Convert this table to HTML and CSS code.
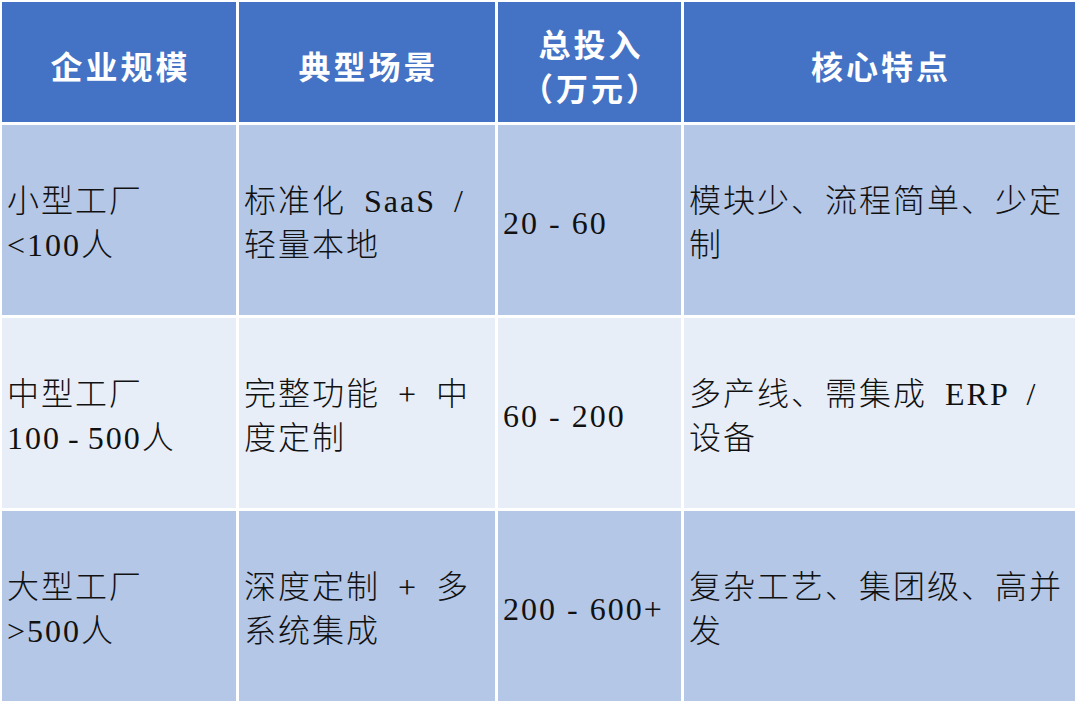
FILE: index.html
```html
<!DOCTYPE html>
<html lang="zh-CN">
<head>
<meta charset="utf-8">
<title>企业规模与投入</title>
<link rel="stylesheet" href="styles.css">
</head>
<body>
<div class="table">
  <div class="cell head">企业规模</div>
  <div class="cell head">典型场景</div>
  <div class="cell head">总投入<br>（万元）</div>
  <div class="cell head">核心特点</div>

  <div class="cell dark">小型工厂<br>&lt;100人</div>
  <div class="cell dark wide">标准化 SaaS / 轻量本地</div>
  <div class="cell dark">20 - 60</div>
  <div class="cell dark wide">模块少、流程简单、少定制</div>

  <div class="cell light tight">中型工厂<br>100 - 500人</div>
  <div class="cell light wide">完整功能 + 中度定制</div>
  <div class="cell light">60 - 200</div>
  <div class="cell light wide">多产线、需集成 ERP / 设备</div>

  <div class="cell dark">大型工厂<br>&gt;500人</div>
  <div class="cell dark wide">深度定制 + 多系统集成</div>
  <div class="cell dark">200 - 600+</div>
  <div class="cell dark wide">复杂工艺、集团级、高并发</div>
</div>
</body>
</html>
```

FILE: styles.css
```css
html, body {
  margin: 0;
  padding: 0;
  background: #ffffff;
}

body {
  width: 1080px;
  height: 707px;
  overflow: hidden;
}

.table {
  margin: 2px 0 0 2px;
  display: grid;
  grid-template-columns: 234px 256px 183px 391px;
  grid-template-rows: 120px 190px 190px 190px;
  gap: 3px;
  width: 1073px;
  background: #ffffff;
}

.cell {
  display: flex;
  align-items: center;
  padding: 6px 5px 0 5px;
  box-sizing: border-box;
  font-family: "Liberation Serif", "Noto Sans CJK SC", serif;
  font-size: 32px;
  font-weight: 300;
  line-height: 44px;
  letter-spacing: 2px;
  color: #111111;
}

.head {
  background: #4472c4;
  color: #ffffff;
  font-family: "Noto Sans CJK SC", "Liberation Sans", sans-serif;
  font-weight: 700;
  letter-spacing: 3px;
  justify-content: center;
  text-align: center;
  padding-left: 8px;
}

.dark {
  background: #b4c7e7;
}

.light {
  background: #e8eef8;
}

.wide {
  word-spacing: 8px;
}

.tight {
  word-spacing: -3px;
}
```
